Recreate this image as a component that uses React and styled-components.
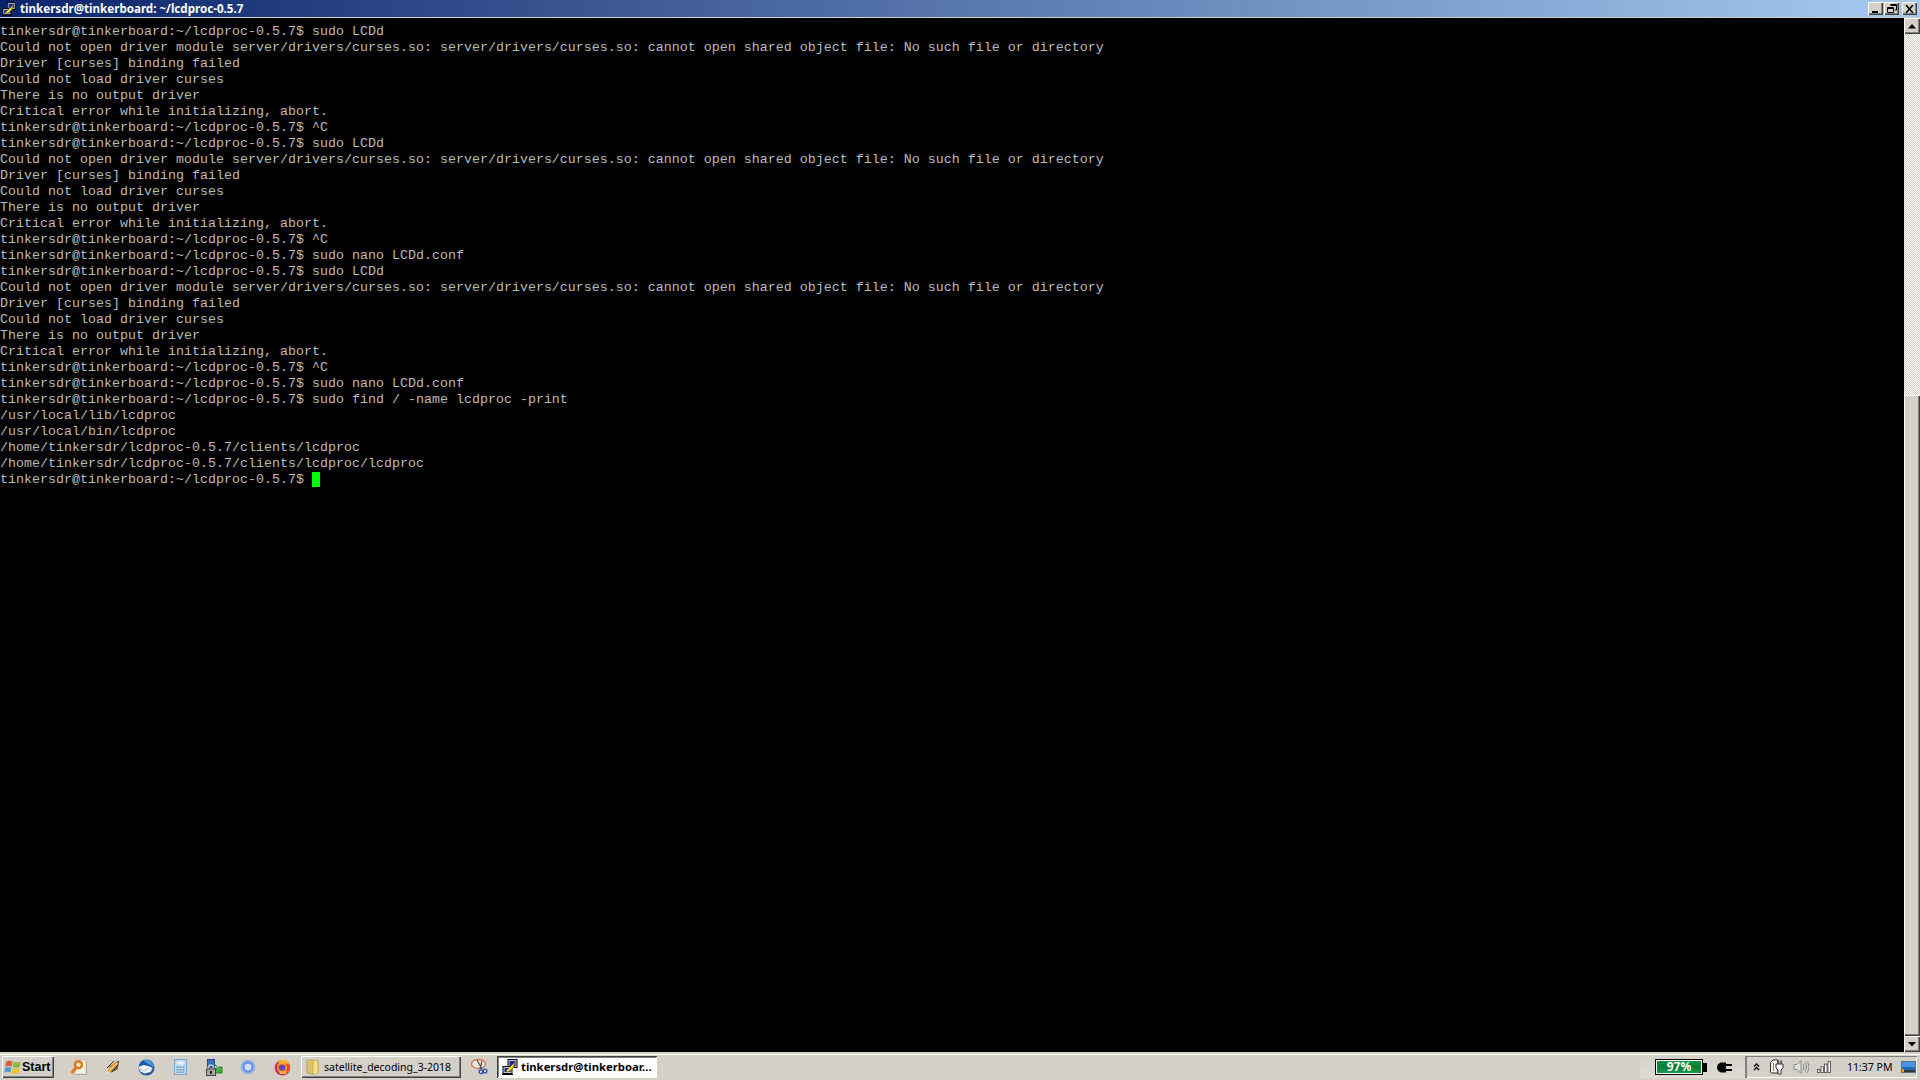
import React from "react";
import styled, { createGlobalStyle } from "styled-components";

const Global = createGlobalStyle`
  html, body { margin: 0; padding: 0; background: #000; overflow: hidden; }
  #root { width: 1920px; height: 1080px; }
`;

const Desktop = styled.div`
  width: 1920px; height: 1080px; display: flex; flex-direction: column;
  background: #d4d0c8; overflow: hidden;
`;
const TitleBar = styled.div`
  height: 18px; flex: none; display: flex; align-items: center; padding: 0 3px 0 2px;
  box-sizing: border-box; gap: 4px;
  background: linear-gradient(90deg, #0a246a 0%, #a6caf0 100%);
  border-bottom: 1px solid #d4d0c8;
`;
const TitleText = styled.span`
  font: bold 11.6px/16px "Noto Sans", sans-serif; color: #fff; white-space: pre; flex: 1;
`;
const WinButtons = styled.div`display: flex; align-items: center;`;
const Bevel = styled.div`
  background: #d4d0c8; box-sizing: border-box; display: flex; align-items: center; justify-content: center;
  box-shadow: inset 1px 1px 0 #fff, inset -1px -1px 0 #404040, inset -2px -2px 0 #808080;
`;
const WinButton = styled(Bevel)`
  width: 15px; height: 13px; margin-left: ${p => p.$gap || 1}px;
`;
const Main = styled.div`flex: 1; min-height: 0; display: flex;`;
const Terminal = styled.pre`
  flex: 1; margin: 0; padding: 6px 0 0 0; background: #000; color: #bbbbbb;
  font: 13.333px/16px "Liberation Mono", monospace; overflow: hidden;
`;
const Cursor = styled.span`
  display: inline-block; width: 8px; height: 15px; background: #00ff00; vertical-align: top;
`;
const ScrollBar = styled.div`
  width: 16px; flex: none; display: flex; flex-direction: column;
  background-color: #fff;
  background-image: conic-gradient(#d4d0c8 25%, #fff 0 50%, #d4d0c8 0 75%, #fff 0);
  background-size: 2px 2px;
`;
const ScrollButton = styled(Bevel)`width: 16px; height: 16px; flex: none;`;
const Track = styled.div`flex: 1; display: flex; flex-direction: column; justify-content: flex-end;`;
const Thumb = styled(Bevel)`height: 641px; flex: none;`;

const TaskBar = styled.div`
  height: 28px; flex: none; box-sizing: border-box; display: flex; align-items: center;
  background: #d4d0c8; border-top: 1px solid #d4d0c8; box-shadow: inset 0 1px 0 #d4d0c8, inset 0 2px 0 #fff;
  padding: 3px 3px 2px 2px;
`;
const StartButton = styled(Bevel)`
  width: 52px; height: 22px; flex: none; justify-content: flex-start; padding-left: 2px;
  font: bold 12.5px/16px "Liberation Sans", sans-serif; color: #000;
`;
const QuickLaunch = styled.div`display: flex; margin-left: 7px; margin-right: 2px;`;
const QuickSlot = styled.div`
  width: ${p => p.$w || 34}px; height: 22px; display: flex; align-items: center; justify-content: center; flex: none;
`;
const TaskButton = styled(Bevel)`
  width: 160px; height: 22px; flex: none; justify-content: flex-start; padding-left: 5px; gap: ${p => (p.$active ? 3 : 4)}px;
  font: ${p => (p.$active ? "bold 11.3px" : "10.5px")}/16px "Noto Sans", sans-serif; color: #000;
  white-space: pre; overflow: hidden;
  ${p => p.$active && `
    background: #fff;
    box-shadow: inset 1px 1px 0 #404040, inset -1px -1px 0 #fff, inset 2px 2px 0 #808080;
  `}
`;
const Spacer = styled.div`flex: 1;`;
const BatteryArea = styled.div`
  width: 106px; height: 22px; flex: none; box-sizing: border-box;
  display: flex; align-items: center; padding-left: 15px;
  background: linear-gradient(180deg, #d4d0c8, #dedbd4);
  border-top-left-radius: 10px;
`;
const Battery = styled.div`
  width: 48px; height: 16px; box-sizing: border-box; flex: none; border: 1px solid #000; outline: 1px solid #fff; outline-offset: -2px;
  background: linear-gradient(180deg, #0f9a47 0%, #0a7a35 50%, #19a04f 100%);
  color: #fff; font: bold 12px/13px "Noto Sans", sans-serif; text-align: center;
`;
const BatteryTip = styled.div`width: 4px; height: 9px; background: #000; flex: none;`;
const PlugSlot = styled.div`margin-left: 10px; display: flex; align-items: center;`;
const Tray = styled.div`
  width: 171px; height: 22px; flex: none; box-sizing: border-box; display: flex; align-items: center;
  box-shadow: inset 1px 1px 0 #808080, inset -1px -1px 0 #fff, -1px 0 0 #808080;
  padding-left: 5px;
`;
const TrayIcon = styled.div`
  width: ${p => p.$w}px; flex: none; display: flex; justify-content: center; align-items: center;
`;
const Clock = styled.span`
  font: 10.5px/16px "Noto Sans", sans-serif; color: #000; white-space: pre; margin-left: 7px; width: 54px; flex: none;
`;

const lines = `tinkersdr@tinkerboard:~/lcdproc-0.5.7$ sudo LCDd
Could not open driver module server/drivers/curses.so: server/drivers/curses.so: cannot open shared object file: No such file or directory
Driver [curses] binding failed
Could not load driver curses
There is no output driver
Critical error while initializing, abort.
tinkersdr@tinkerboard:~/lcdproc-0.5.7$ ^C
tinkersdr@tinkerboard:~/lcdproc-0.5.7$ sudo LCDd
Could not open driver module server/drivers/curses.so: server/drivers/curses.so: cannot open shared object file: No such file or directory
Driver [curses] binding failed
Could not load driver curses
There is no output driver
Critical error while initializing, abort.
tinkersdr@tinkerboard:~/lcdproc-0.5.7$ ^C
tinkersdr@tinkerboard:~/lcdproc-0.5.7$ sudo nano LCDd.conf
tinkersdr@tinkerboard:~/lcdproc-0.5.7$ sudo LCDd
Could not open driver module server/drivers/curses.so: server/drivers/curses.so: cannot open shared object file: No such file or directory
Driver [curses] binding failed
Could not load driver curses
There is no output driver
Critical error while initializing, abort.
tinkersdr@tinkerboard:~/lcdproc-0.5.7$ ^C
tinkersdr@tinkerboard:~/lcdproc-0.5.7$ sudo nano LCDd.conf
tinkersdr@tinkerboard:~/lcdproc-0.5.7$ sudo find / -name lcdproc -print
/usr/local/lib/lcdproc
/usr/local/bin/lcdproc
/home/tinkersdr/lcdproc-0.5.7/clients/lcdproc
/home/tinkersdr/lcdproc-0.5.7/clients/lcdproc/lcdproc
tinkersdr@tinkerboard:~/lcdproc-0.5.7$ `;

const Ico = ({ w = 16, h = 16, vb, children }) => (
  <svg width={w} height={h} viewBox={vb || `0 0 ${w} ${h}`} style={{ display: "block", flex: "none" }}>{children}</svg>
);

const PuttyIcon = ({ s = 16 }) => (
  <Ico w={s} h={s} vb="0 0 16 16">
    <rect x="6" y="0.5" width="9" height="8" fill="#c8c8d8" stroke="#000" />
    <rect x="7.500" y="2" width="6" height="5" fill="#1a2a9a" />
    <rect x="1" y="7.500" width="9" height="7" fill="#c8c8d8" stroke="#000" />
    <rect x="2.500" y="9" width="6" height="4" fill="#1a2a9a" />
    <path d="M0 15.500h11" stroke="#000" />
    <path d="M4 12L13 3l-2 5 2-1-7 6z" fill="#ffe820" stroke="#806000" strokeWidth="0.5" />
  </Ico>
);
const StartLogo = () => (
  <Ico w={18} h={16}>
    <path d="M2 3C4 1.500 6 1.500 8.500 2.500L7.500 7.500C5.500 6.600 3.500 6.600 1.300 8z" fill="#e05a30" />
    <path d="M9.500 2.800c2.500 1 4.500 1 7 0L15.600 8c-2.400 1-4.600 1-7 0z" fill="#8ab840" />
    <path d="M1 9c2.200-1.300 4.200-1.300 6.300-.5L6.400 13.500C4.300 12.500 2.400 12.700.4 13.800z" fill="#4a9ad8" />
    <path d="M8.300 9c2.400.9 4.600.9 7.100 0l-.9 5c-2.400 1-4.700 1-7.100 0z" fill="#f0c030" />
  </Ico>
);
const SearchDoc = () => (
  <Ico w={17} h={17}>
    <rect x="6" y="2" width="11" height="14" fill="#a8a49c" />
    <rect x="5" y="1" width="11" height="14" fill="#f6f2e8" stroke="#b8b4ac" strokeWidth="0.6" />
    <circle cx="8.500" cy="5.800" r="3.500" fill="#f8e4c0" stroke="#e07818" strokeWidth="2.400" />
    <path d="M6 8.800L2.500 13" stroke="#e07818" strokeWidth="3" strokeLinecap="round" />
  </Ico>
);
const WinampIcon = () => (
  <Ico w={17} h={17}>
    <path d="M1 15l3-2 1-6 9-6 2 1-2 9-7 3-3-1z" fill="#6a6a62" stroke="#e8e6de" strokeWidth="0.8" />
    <path d="M4.500 12.500L13 3.500" stroke="#f0a030" strokeWidth="4" />
    <path d="M5.500 11.500L12.500 4.500" stroke="#fce0a0" strokeWidth="1" />
    <path d="M3 9l7-7M8 13l6-7" stroke="#303030" strokeWidth="1" />
  </Ico>
);
const Thunderbird = () => (
  <Ico w={17} h={17}>
    <circle cx="8.500" cy="8.500" r="8" fill="#1f5aaa" />
    <path d="M6 1a8 8 0 0 1 10 7l-4-2-5-3z" fill="#4a9ae0" />
    <path d="M0.500 8l5-2 5 1 4 2-2 4-6 1.500-4-2z" fill="#f4f6fa" />
    <path d="M2 10l4 2 5-3" fill="none" stroke="#a8bcd8" />
  </Ico>
);
const Calculator = () => (
  <Ico w={13} h={16}>
    <rect x="0.5" y="0.5" width="12" height="15" fill="#c2def2" stroke="#78a8d0" />
    <rect x="2" y="2" width="9" height="4" fill="#e4f0fa" stroke="#98b8d4" strokeWidth="0.5" />
    {[0, 1, 2].map(r => [0, 1, 2].map(c => (
      <rect key={`${r}${c}`} x={2.5 + c * 3} y={7.5 + r * 2.5} width="2" height="1.5" fill="#6a94bc" />
    )))}
  </Ico>
);
const LockNet = () => (
  <Ico w={18} h={17}>
    <rect x="2.500" y="0.5" width="7" height="8" fill="#3a70c8" stroke="#244a90" />
    <path d="M9 9l2 1 3-2 3 0v6H9z" fill="#48b040" stroke="#2a7a28" />
    <path d="M8 3l4 5" stroke="#2a7a28" />
    <path d="M3.500 10V8.500a2.500 2.500 0 0 1 5 0V10" fill="none" stroke="#c0c0c0" strokeWidth="1.600" />
    <rect x="1.500" y="10" width="9" height="6.500" fill="#a8a8a8" stroke="#404040" />
    <rect x="5" y="12" width="2" height="3" fill="#202020" />
  </Ico>
);
const ChromeIcon = () => (
  <Ico w={16} h={16}>
    <circle cx="8" cy="8" r="7.500" fill="#9ab6e8" />
    <circle cx="8" cy="8" r="4.500" fill="#d0def6" stroke="#5f88e0" strokeWidth="1.800" />
  </Ico>
);
const Firefox = () => (
  <Ico w={17} h={17}>
    <circle cx="8.500" cy="8.800" r="7.800" fill="#d02a60" />
    <circle cx="9.500" cy="8" r="6.600" fill="#ff8a1c" />
    <path d="M4 3c3-3 8-3 10 0l2 4-3 0c-1-2-4-3-6-2z" fill="#ffb428" />
    <circle cx="8" cy="8.600" r="3.200" fill="#5a48b8" />
    <path d="M4 9c1 4 6 5 9 2l-1 4-6 0z" fill="#ffb838" />
    <path d="M11 4c3 3 3 7 0 10l4-3 1-5z" fill="#f03c20" />
  </Ico>
);
const FolderIcon = () => (
  <Ico w={14} h={16}>
    <path d="M1 1h6l5 1v12l-6 1-5-1z" fill="#dcc468" stroke="#a8923c" strokeWidth="0.6" />
    <path d="M7 2l5-1v13l-5 2z" fill="#f2de84" stroke="#b8a04a" strokeWidth="0.6" />
  </Ico>
);
const Scissors = () => (
  <Ico w={17} h={17}>
    <ellipse cx="7.500" cy="5" rx="7" ry="4.500" fill="#f4e8e4" stroke="#d87050" strokeWidth="1.300" />
    <path d="M6 1l5 9M11 2l-2 8" stroke="#505050" strokeWidth="1.200" />
    <circle cx="10" cy="12.800" r="1.900" fill="none" stroke="#2050c0" strokeWidth="1.300" />
    <circle cx="14" cy="12" r="1.900" fill="none" stroke="#2050c0" strokeWidth="1.300" />
  </Ico>
);
const BlackPlug = () => (
  <Ico w={16} h={11}>
    <path d="M5 0.5h4v10H5C2 10.500 0 8 0 5.500S2 .5 5 .5z" fill="#000" />
    <path d="M9 2h6v2H9zM9 7h6v2H9z" fill="#000" />
  </Ico>
);
const Chevrons = () => (
  <Ico w={7} h={8}>
    <path d="M1 3.500L3.500 1 6 3.500M1 7l2.500-2.500L6 7" fill="none" stroke="#000" strokeWidth="1.300" />
  </Ico>
);
const DocPlug = () => (
  <Ico w={16} h={16}>
    <path d="M1.500 3.500L4 1h5v13H2.500l-1-1z" fill="#f4f2ec" stroke="#303030" />
    <path d="M4.500 4v8" stroke="#808080" />
    <path d="M7 5h7v4l-2 2v4H9v-4L7 9z" fill="#fff" stroke="#303030" />
    <path d="M9 1.500v3M12 1.500v3" stroke="#303030" strokeWidth="1.400" />
  </Ico>
);
const Speaker = () => (
  <Ico w={16} h={16}>
    <path d="M1 5.500h3L8 1.500v13l-4-4H1z" fill="#e0e0dc" stroke="#8a8a88" />
    <path d="M10 5c1 2 1 4 0 6M12 3.500c1.800 3 1.800 6 0 9M14 2c2.400 4 2.400 8 0 12" fill="none" stroke="#8a8a88" />
  </Ico>
);
const Signal = () => (
  <Ico w={16} h={12}>
    {[0, 1, 2, 3].map(i => (
      <rect key={i} x={0.5 + i * 3.5} y={8.5 - i * 2.7} width="2.5" height={3 + i * 2.7} fill="#fff" stroke="#404040" strokeWidth="0.8" />
    ))}
  </Ico>
);
const ShowDesktop = () => (
  <Ico w={15} h={12}>
    <rect x="0.5" y="0.5" width="14" height="11" fill="#2468c0" stroke="#5a7088" />
    <rect x="1" y="1" width="13" height="5" fill="#4a94e4" />
    <rect x="1" y="9" width="13" height="2" fill="#30353a" />
    <rect x="1" y="8" width="2" height="3" fill="#e0a020" />
  </Ico>
);

export default function App() {
  return (
    <Desktop>
      <Global />
      <TitleBar>
        <PuttyIcon s={14} />
        <TitleText>tinkersdr@tinkerboard: ~/lcdproc-0.5.7</TitleText>
        <WinButtons>
          <WinButton><Ico w={9} h={9}><path d="M1 7h6v2H1z" fill="#000" /></Ico></WinButton>
          <WinButton>
            <Ico w={10} h={9}><path d="M3.500.5h6v5.500h-2M.5 3.500h6v5h-6zM.5 4.500h6M3.500 1.500h6" fill="none" stroke="#000" /></Ico>
          </WinButton>
          <WinButton $gap={3}>
            <Ico w={9} h={8}><path d="M1 0l7 8M8 0L1 8" stroke="#000" strokeWidth="1.600" fill="none" /></Ico>
          </WinButton>
        </WinButtons>
      </TitleBar>
      <Main>
        <Terminal>{lines}<Cursor /></Terminal>
        <ScrollBar>
          <ScrollButton><Ico w={8} h={5}><path d="M4 0L8 4.500H0z" fill="#000" /></Ico></ScrollButton>
          <Track><Thumb /></Track>
          <ScrollButton><Ico w={8} h={5}><path d="M0 0h8L4 4.500z" fill="#000" /></Ico></ScrollButton>
        </ScrollBar>
      </Main>
      <TaskBar>
        <StartButton><StartLogo />Start</StartButton>
        <QuickLaunch>
          <QuickSlot><SearchDoc /></QuickSlot>
          <QuickSlot><WinampIcon /></QuickSlot>
          <QuickSlot><Thunderbird /></QuickSlot>
          <QuickSlot><Calculator /></QuickSlot>
          <QuickSlot><LockNet /></QuickSlot>
          <QuickSlot><ChromeIcon /></QuickSlot>
          <QuickSlot><Firefox /></QuickSlot>
        </QuickLaunch>
        <TaskButton><FolderIcon />satellite_decoding_3-2018</TaskButton>
        <QuickSlot $w={36}><Scissors /></QuickSlot>
        <TaskButton $active><PuttyIcon />tinkersdr@tinkerboar...</TaskButton>
        <Spacer />
        <BatteryArea>
          <Battery>97%</Battery>
          <BatteryTip />
          <PlugSlot><BlackPlug /></PlugSlot>
        </BatteryArea>
        <Tray>
          <TrayIcon $w={10}><Chevrons /></TrayIcon>
          <TrayIcon $w={31}><DocPlug /></TrayIcon>
          <TrayIcon $w={18}><Speaker /></TrayIcon>
          <TrayIcon $w={30}><Signal /></TrayIcon>
          <Clock>11:37 PM</Clock>
          <ShowDesktop />
        </Tray>
      </TaskBar>
    </Desktop>
  );
}
